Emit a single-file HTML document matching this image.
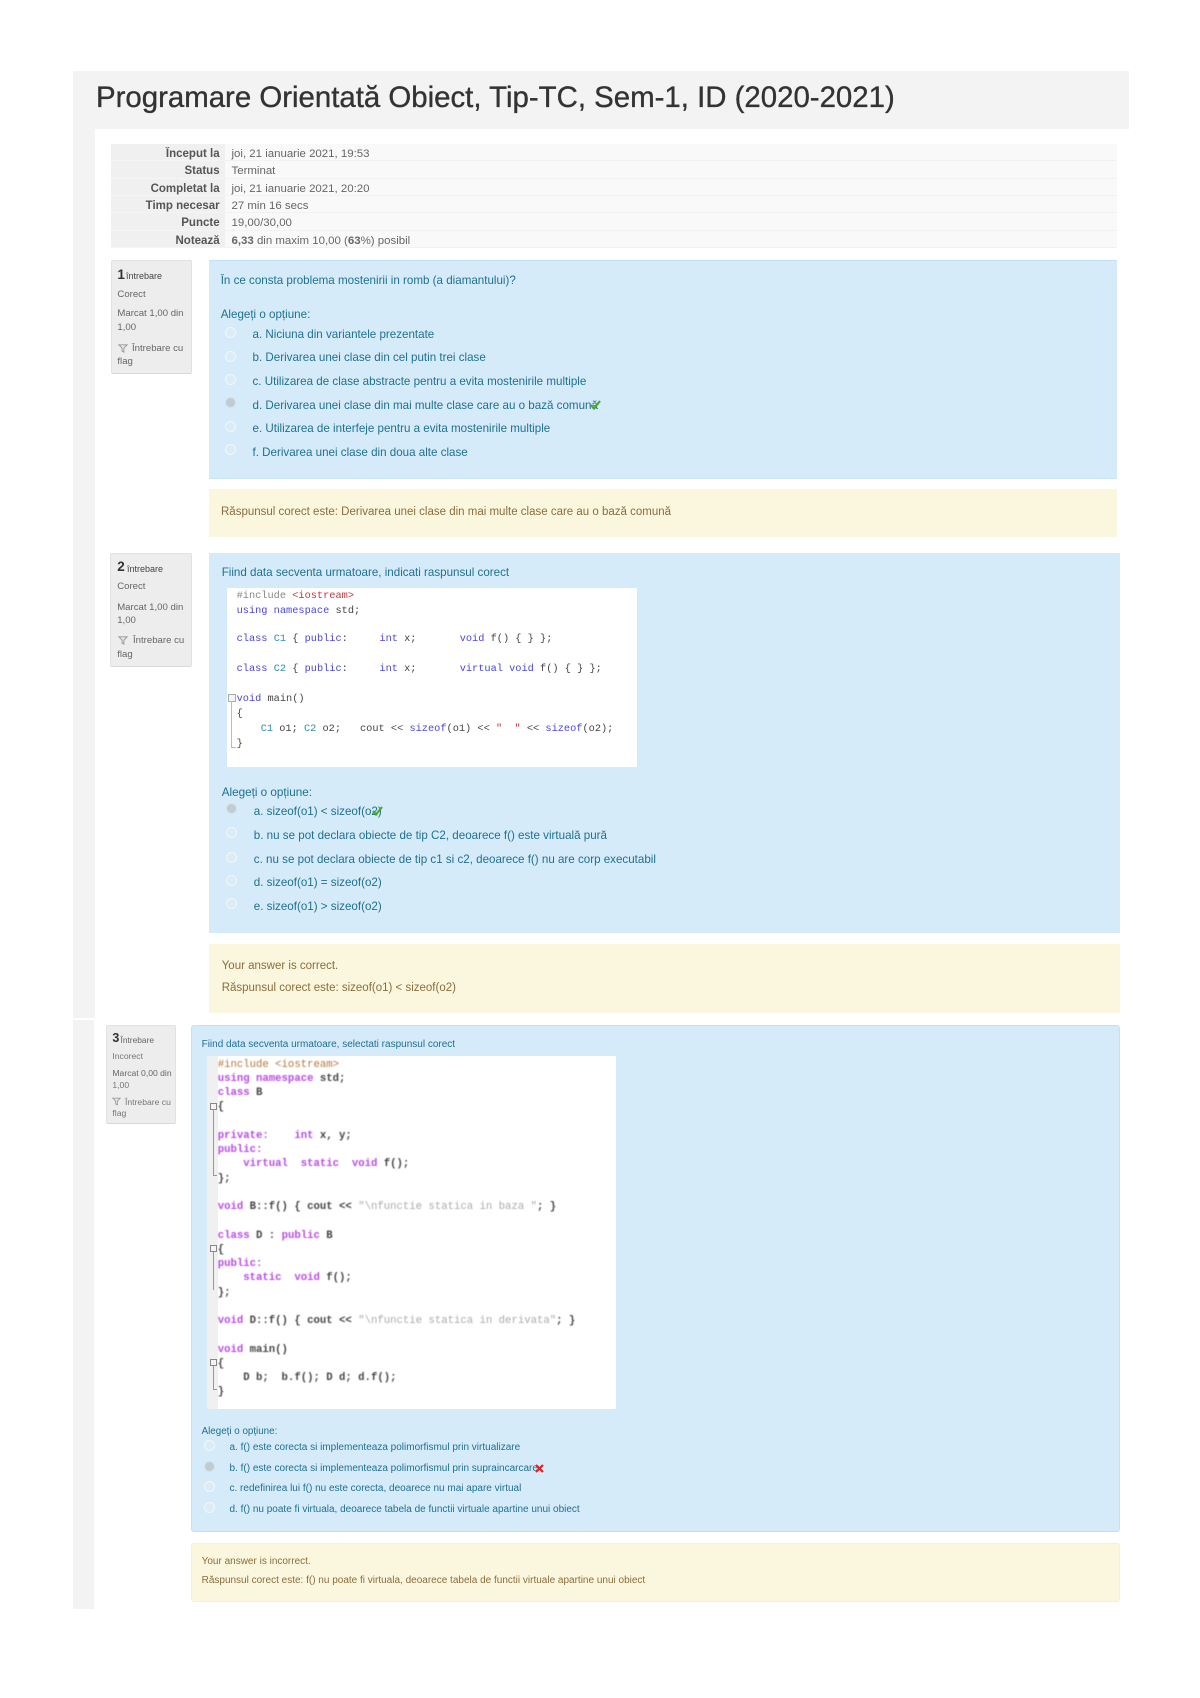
<!DOCTYPE html>
<html lang="ro"><head><meta charset="utf-8"><title>Programare Orientată Obiect</title>
<style>
html,body{margin:0;padding:0;background:#fff}
#p{position:relative;width:1200px;height:1698px;overflow:hidden;background:#fff;font-family:"Liberation Sans",sans-serif;filter:blur(.3px)}
#p div{position:absolute}
.t{white-space:pre;line-height:20px;margin-top:-9px}
.b{color:#1f7090;font-size:11.6px;filter:blur(.35px)}
.th{font-weight:bold;color:#555;font-size:11.5px;right:980.4px;filter:blur(.3px)}
.td{color:#666;font-size:11.45px;left:231.5px;filter:blur(.35px)}
.row{left:224.6px;width:892.4px;height:16.3px;background:#f9f9f9;border-bottom:1px solid #f2f2f2}
.rowl{left:110.5px;width:114.1px;height:16.3px;background:#f0f0f0;border-bottom:1px solid #f4f4f4}
.i{background:#ededee;border:1px solid #e2e2e2;border-bottom-color:#d8d8d8;border-radius:2px;box-sizing:border-box}
.g{color:#666;font-size:9.6px;filter:blur(.35px)}
.q{background:#d5ebf9;border-top:1px solid #bfe2f6;box-sizing:border-box}
.f{background:#fbf7de;box-sizing:border-box}
.y{color:#8a6d3b;font-size:11.5px;filter:blur(.35px)}
.r{width:9px;height:9px;border-radius:50%;background:#dcecf7;border:1.5px solid #f2f6f8;margin:-6px 0 0 -6px}
.s{background:#c0ccd3;border-color:#d6e0e6}
.c{white-space:pre;font-family:"Liberation Mono",monospace;font-size:10.3px;line-height:16px;margin-top:-7px;color:#444;filter:blur(.3px)}
.k{color:#4a44e0}.n{color:#2b91af}.m{color:#888}.e{color:#c8353c}
.d{white-space:pre;font-family:"Liberation Mono",monospace;font-size:10.65px;line-height:14.25px;color:#444;font-weight:bold;filter:blur(.4px)}
.d i{font-style:normal;color:#b84ae6}.d u{text-decoration:none;color:#aaa;font-weight:normal}.d s{text-decoration:none;color:#b5763a;font-weight:normal}
</style></head><body>
<div id="p">
<div style="left:73px;top:71px;width:1056px;height:58px;background:#f3f3f3"></div>
<div style="left:73px;top:129px;width:22px;height:889px;background:#f3f3f3"></div>
<div style="left:73px;top:1020px;width:20.5px;height:589px;background:#f3f3f3"></div>
<div class="t" style="left:96px;top:97px;font-size:29.4px;color:#333;-webkit-text-stroke:.35px #333">Programare Orientată Obiect, Tip-TC, Sem-1, ID (2020-2021)</div>

<div class="rowl" style="top:144px"></div><div class="row" style="top:144px"></div>
<div class="rowl" style="top:161.3px"></div><div class="row" style="top:161.3px"></div>
<div class="rowl" style="top:178.7px"></div><div class="row" style="top:178.7px"></div>
<div class="rowl" style="top:196px"></div><div class="row" style="top:196px"></div>
<div class="rowl" style="top:213.3px"></div><div class="row" style="top:213.3px"></div>
<div class="rowl" style="top:230.7px"></div><div class="row" style="top:230.7px"></div>
<div class="t th" style="top:153px">Început la</div><div class="t td" style="top:153px">joi, 21 ianuarie 2021, 19:53</div>
<div class="t th" style="top:170px">Status</div><div class="t td" style="top:170px">Terminat</div>
<div class="t th" style="top:187.6px">Completat la</div><div class="t td" style="top:187.6px">joi, 21 ianuarie 2021, 20:20</div>
<div class="t th" style="top:205px">Timp necesar</div><div class="t td" style="top:205px">27 min 16 secs</div>
<div class="t th" style="top:222.3px">Puncte</div><div class="t td" style="top:222.3px">19,00/30,00</div>
<div class="t th" style="top:239.6px">Notează</div><div class="t td" style="top:239.6px"><b>6,33</b> din maxim 10,00 (<b>63</b>%) posibil</div>

<!-- Q1 -->
<div class="i" style="left:110.5px;top:260px;width:81px;height:114px"></div>
<div class="t" style="left:117.4px;top:273.5px;font-size:13.5px;font-weight:bold;color:#333">1</div>
<div class="t g" style="left:126px;top:275px;font-size:9px;color:#444">întrebare</div>
<div class="t g" style="left:117.4px;top:293.5px">Corect</div>
<div class="t g" style="left:117.4px;top:313px">Marcat 1,00 din</div>
<div class="t g" style="left:117.4px;top:327px">1,00</div>
<svg style="position:absolute;left:118px;top:344px" width="10" height="9" viewBox="0 0 11 10"><path d="M1 1h9L6.5 4.5V9L4.5 8V4.5z" fill="none" stroke="#999" stroke-width="1.1"/></svg>
<div class="t g" style="left:132px;top:347.5px">Întrebare cu</div>
<div class="t g" style="left:117.4px;top:361px">flag</div>

<div class="q" style="left:209px;top:260px;width:908px;height:219px;border-bottom:1px solid #c9e6f7"></div>
<div class="t b" style="left:220.7px;top:279.5px">În ce consta problema mostenirii in romb (a diamantului)?</div>
<div class="t b" style="left:220.7px;top:313.7px">Alegeți o opțiune:</div>
<div class="r" style="left:231px;top:333px"></div>
<div class="r" style="left:231px;top:356.5px"></div>
<div class="r" style="left:231px;top:380px"></div>
<div class="r s" style="left:231px;top:403px"></div>
<div class="r" style="left:231px;top:427px"></div>
<div class="r" style="left:231px;top:450px"></div>
<div class="t b" style="left:252.5px;top:334px">a. Niciuna din variantele prezentate</div>
<div class="t b" style="left:252.5px;top:357.4px">b. Derivarea unei clase din cel putin trei clase</div>
<div class="t b" style="left:252.5px;top:380.7px">c. Utilizarea de clase abstracte pentru a evita mostenirile multiple</div>
<div class="t b" style="left:252.5px;top:404.5px">d. Derivarea unei clase din mai multe clase care au o bază comună</div>
<svg style="position:absolute;left:590px;top:400px" width="11" height="10" viewBox="0 0 11 10"><path d="M1 5l3 3.5L10 1" fill="none" stroke="#4aa82e" stroke-width="2.2"/></svg>
<div class="t b" style="left:252.5px;top:427.7px">e. Utilizarea de interfeje pentru a evita mostenirile multiple</div>
<div class="t b" style="left:252.5px;top:451.5px">f. Derivarea unei clase din doua alte clase</div>

<div class="f" style="left:209px;top:489px;width:908px;height:48px"></div>
<div class="t y" style="left:221px;top:510.5px">Răspunsul corect este: Derivarea unei clase din mai multe clase care au o bază comună</div>

<!-- Q2 -->
<div class="i" style="left:110.3px;top:553px;width:81.7px;height:114px"></div>
<div class="t" style="left:117.2px;top:566px;font-size:13.5px;font-weight:bold;color:#333">2</div>
<div class="t g" style="left:127px;top:567.5px;font-size:9px;color:#444">întrebare</div>
<div class="t g" style="left:117.2px;top:586px">Corect</div>
<div class="t g" style="left:117.2px;top:606.5px">Marcat 1,00 din</div>
<div class="t g" style="left:117.2px;top:620px">1,00</div>
<svg style="position:absolute;left:118px;top:636px" width="10" height="9" viewBox="0 0 11 10"><path d="M1 1h9L6.5 4.5V9L4.5 8V4.5z" fill="none" stroke="#999" stroke-width="1.1"/></svg>
<div class="t g" style="left:133px;top:640px">Întrebare cu</div>
<div class="t g" style="left:117.2px;top:654px">flag</div>

<div class="q" style="left:209px;top:553px;width:911px;height:380px;border-top-color:#d5ebf9"></div>
<div class="t b" style="left:221.7px;top:572px">Fiind data secventa urmatoare, indicati raspunsul corect</div>
<div style="left:226.7px;top:588px;width:410px;height:179px;background:#fff"></div>
<div class="c" style="left:236.6px;top:594.7px"><span class="m">#include</span> <span class="e">&lt;iostream&gt;</span></div>
<div class="c" style="left:236.6px;top:609.7px"><span class="k">using namespace</span> std;</div>
<div class="c" style="left:236.6px;top:638.3px"><span class="k">class</span> <span class="n">C1</span> { <span class="k">public</span>:</div>
<div class="c k" style="left:379.4px;top:638.3px">int<span style="color:#444"> x;</span></div>
<div class="c" style="left:459.7px;top:638.3px"><span class="k">void</span> f() { } };</div>
<div class="c" style="left:236.6px;top:668.3px"><span class="k">class</span> <span class="n">C2</span> { <span class="k">public</span>:</div>
<div class="c k" style="left:379.4px;top:668.3px">int<span style="color:#444"> x;</span></div>
<div class="c" style="left:459.7px;top:668.3px"><span class="k">virtual void</span> f() { } };</div>
<div style="left:227.5px;top:693.5px;width:6px;height:6px;border:1px solid #aaa;background:#f4f4f4"></div>
<div style="left:231px;top:701px;width:1px;height:46px;background:#bbb"></div>
<div style="left:231px;top:747px;width:5px;height:1px;background:#bbb"></div>
<div class="c" style="left:236.6px;top:697.7px"><span class="k">void</span> main()</div>
<div class="c" style="left:236.6px;top:713px">{</div>
<div class="c" style="left:260.7px;top:728px"><span class="n">C1</span> o1; <span class="n">C2</span> o2;</div>
<div class="c" style="left:360px;top:728px">cout &lt;&lt; <span class="k">sizeof</span>(o1) &lt;&lt; <span class="e">"  "</span> &lt;&lt; <span class="k">sizeof</span>(o2);</div>
<div class="c" style="left:236.6px;top:743px">}</div>

<div class="t b" style="left:221.7px;top:791.7px;font-size:11.7px">Alegeți o opțiune:</div>
<div class="r s" style="left:231.6px;top:809px"></div>
<div class="r" style="left:231.6px;top:833px"></div>
<div class="r" style="left:231.6px;top:857.7px"></div>
<div class="r" style="left:231.6px;top:880.7px"></div>
<div class="r" style="left:231.6px;top:904px"></div>
<div class="t b" style="left:253.8px;top:811px">a. sizeof(o1) &lt; sizeof(o2)</div>
<svg style="position:absolute;left:372px;top:806px" width="11" height="10" viewBox="0 0 11 10"><path d="M1 5l3 3.5L10 1" fill="none" stroke="#4aa82e" stroke-width="2.2"/></svg>
<div class="t b" style="left:253.8px;top:835px">b. nu se pot declara obiecte de tip C2, deoarece f() este virtuală pură</div>
<div class="t b" style="left:253.8px;top:859px">c. nu se pot declara obiecte de tip c1 si c2, deoarece f() nu are corp executabil</div>
<div class="t b" style="left:253.8px;top:882px">d. sizeof(o1) = sizeof(o2)</div>
<div class="t b" style="left:253.8px;top:905.7px">e. sizeof(o1) &gt; sizeof(o2)</div>

<div class="f" style="left:209px;top:944px;width:911px;height:69px"></div>
<div class="t y" style="left:221.7px;top:965px">Your answer is correct.</div>
<div class="t y" style="left:221.7px;top:986.7px">Răspunsul corect este: sizeof(o1) &lt; sizeof(o2)</div>

<!-- Q3 -->
<div class="i" style="left:106px;top:1025.3px;width:69.6px;height:99px"></div>
<div class="t" style="left:112.4px;top:1037px;font-size:12.5px;font-weight:bold;color:#333">3</div>
<div class="t g" style="left:120.5px;top:1038.5px;font-size:8.4px;color:#666">Întrebare</div>
<div class="t g" style="left:112.4px;top:1054.7px;font-size:8.6px;color:#777">Incorect</div>
<div class="t g" style="left:112.4px;top:1072px;font-size:8.6px">Marcat 0,00 din</div>
<div class="t g" style="left:112.4px;top:1083.5px;font-size:8.6px;color:#777">1,00</div>
<svg style="position:absolute;left:112px;top:1097px" width="9" height="9" viewBox="0 0 11 10"><path d="M1 1h9L6.5 4.5V9L4.5 8V4.5z" fill="none" stroke="#999" stroke-width="1.1"/></svg>
<div class="t g" style="left:125px;top:1100.7px;font-size:8.6px;color:#777">Întrebare cu</div>
<div class="t g" style="left:112.4px;top:1112px;font-size:8.6px;color:#777">flag</div>

<div class="q" style="left:190.5px;top:1025.3px;width:929.5px;height:506.7px;border:1px solid #c0e2f6;border-radius:3px"></div>
<div class="t b" style="left:201.6px;top:1043.7px;font-size:10px">Fiind data secventa urmatoare, selectati raspunsul corect</div>
<div style="left:207.3px;top:1056px;width:408.4px;height:353px;background:#fff"></div>
<div style="left:207.3px;top:1056px;width:10.4px;height:353px;background:#f0f0f0"></div>
<div style="left:209.5px;top:1102.5px;width:5px;height:5px;border:1px solid #888;background:#f4f4f4"></div>
<div style="left:212.5px;top:1109px;width:1px;height:66px;background:#999"></div>
<div style="left:212.5px;top:1175px;width:4px;height:1px;background:#999"></div>
<div style="left:209.5px;top:1245px;width:5px;height:5px;border:1px solid #888;background:#f4f4f4"></div>
<div style="left:212.5px;top:1252px;width:1px;height:38px;background:#999"></div>
<div style="left:209.5px;top:1358.5px;width:5px;height:5px;border:1px solid #888;background:#f4f4f4"></div>
<div style="left:212.5px;top:1366px;width:1px;height:23px;background:#999"></div>
<div style="left:212.5px;top:1389px;width:4px;height:1px;background:#999"></div>
<div class="d" style="left:217.7px;top:1057.7px"><s>#include &lt;iostream&gt;</s>
<i>using namespace</i> std;
<i>class</i> B
{

<i>private:</i>    <i>int</i> x, y;
<i>public:</i>
    <i>virtual</i>  <i>static</i>  <i>void</i> f();
};

<i>void</i> B::f() { cout &lt;&lt; <u>"\nfunctie statica in baza "</u>; }

<i>class</i> D : <i>public</i> B
{
<i>public:</i>
    <i>static</i>  <i>void</i> f();
};

<i>void</i> D::f() { cout &lt;&lt; <u>"\nfunctie statica in derivata"</u>; }

<i>void</i> main()
{
    D b;  b.f(); D d; d.f();
}</div>

<div class="t b" style="left:201.6px;top:1430.7px;font-size:9.8px">Alegeți o opțiune:</div>
<div class="r" style="left:210.4px;top:1446px"></div>
<div class="r s" style="left:210.4px;top:1466.7px"></div>
<div class="r" style="left:210.4px;top:1487.3px"></div>
<div class="r" style="left:210.4px;top:1508px"></div>
<div class="t b" style="left:229.5px;top:1447.3px;font-size:10px">a. f() este corecta si implementeaza polimorfismul prin virtualizare</div>
<div class="t b" style="left:229.5px;top:1468px;font-size:10px">b. f() este corecta si implementeaza polimorfismul prin supraincarcare</div>
<svg style="position:absolute;left:535px;top:1464px" width="9" height="9" viewBox="0 0 9 9"><path d="M1 1l7 7M8 1L1 8" fill="none" stroke="#e02222" stroke-width="2.2"/></svg>
<div class="t b" style="left:229.5px;top:1488.3px;font-size:10px">c. redefinirea lui f() nu este corecta, deoarece nu mai apare virtual</div>
<div class="t b" style="left:229.5px;top:1509px;font-size:10px">d. f() nu poate fi virtuala, deoarece tabela de functii virtuale apartine unui obiect</div>

<div class="f" style="left:190.5px;top:1542.7px;width:929.5px;height:59px;border:1px solid #f8f1cc;border-radius:3px"></div>
<div class="t y" style="left:201.6px;top:1560.7px;font-size:10px">Your answer is incorrect.</div>
<div class="t y" style="left:201.6px;top:1580px;font-size:10px">Răspunsul corect este: f() nu poate fi virtuala, deoarece tabela de functii virtuale apartine unui obiect</div>
</div>
</body></html>
